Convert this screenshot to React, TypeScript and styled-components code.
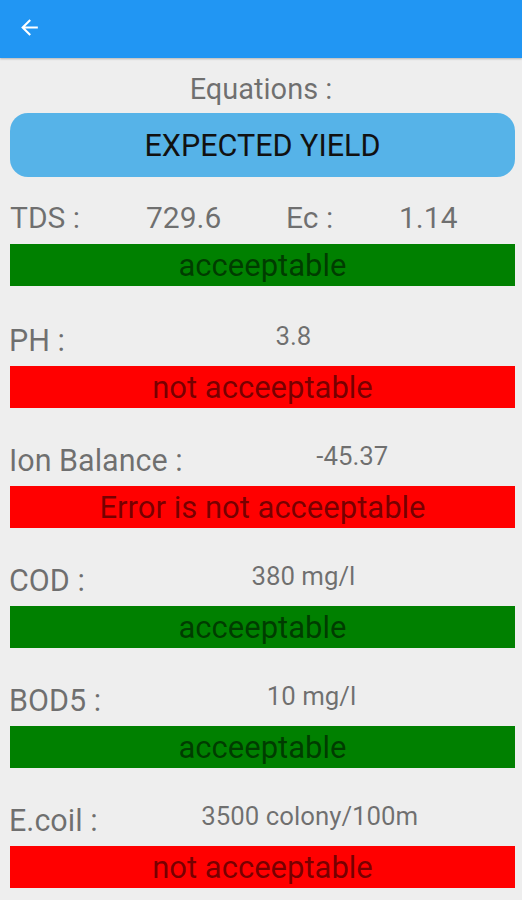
import React from "react";
import styled, { createGlobalStyle } from "styled-components";

const Global = createGlobalStyle`
  html, body { margin: 0; padding: 0; background: #eeeeee; }
  body { font-family: Roboto, "Noto Sans", Arial, sans-serif; }
  * { box-sizing: border-box; }
`;

const Page = styled.div`
  width: 522px;
  min-height: 900px;
  background: #eeeeee;
  display: flex;
  flex-direction: column;
  overflow: hidden;
`;

const AppBar = styled.header`
  height: 58px;
  background: #2196f3;
  display: flex;
  align-items: flex-start;
  padding: 15px 0 0 17px;
  box-shadow: 0 1px 2px rgba(0, 0, 0, 0.25);
`;

const BackButton = styled.button`
  border: 0;
  background: transparent;
  padding: 0;
  width: 25px;
  height: 25px;
  display: flex;
  color: #fff;
`;

const Title = styled.div`
  margin-top: 14px;
  text-align: center;
  font-size: 29px;
  line-height: 34px;
  color: rgba(0, 0, 0, 0.54);
`;

const YieldButton = styled.button`
  margin: 7px 7px 0 10px;
  height: 64px;
  border: 0;
  border-radius: 18px;
  background: #56b3e8;
  color: #111;
  font-family: Roboto, "Noto Sans", Arial, sans-serif;
  font-size: 30.5px;
  text-transform: uppercase;
  display: flex;
  align-items: center;
  justify-content: center;
`;

const Sections = styled.div`
  display: flex;
  flex-direction: column;
  gap: 33px;
  margin-top: 24px;
`;

const Section = styled.section<{ $first?: boolean }>`
  display: flex;
  flex-direction: column;
  gap: 10px;
  margin-bottom: ${(p) => (p.$first ? "2px" : "0")};
`;

const QuadRow = styled.div`
  display: grid;
  grid-template-columns: 136px 140px 113px 1fr;
  padding-left: 10px;
  font-size: 30px;
  line-height: 33px;
  color: rgba(0, 0, 0, 0.54);
`;

const Row = styled.div`
  display: flex;
  align-items: flex-start;
  padding-left: 9px;
  height: 35px;
`;

const Label = styled.div`
  font-size: 30.5px;
  line-height: 34px;
  padding-top: 3px;
  color: rgba(0, 0, 0, 0.54);
  white-space: nowrap;
`;

const Value = styled.div`
  flex: 1;
  text-align: center;
  font-size: 25.8px;
  line-height: 29px;
  padding-top: 1px;
  color: rgba(0, 0, 0, 0.54);
  white-space: nowrap;
`;

const StatusBar = styled.div<{ $ok: boolean }>`
  margin: 0 7px 0 10px;
  height: 42px;
  background: ${(p) => (p.$ok ? "#008000" : "#ff0000")};
  color: rgba(0, 0, 0, 0.54);
  font-size: 31px;
  line-height: 42px;
  padding-top: 1px;
  text-align: center;
  white-space: nowrap;
`;

const items = [
  { label: "PH :", value: "3.8", status: "not acceeptable", ok: false },
  { label: "Ion Balance :", value: "-45.37", status: "Error is not acceeptable", ok: false },
  { label: "COD :", value: "380 mg/l", status: "acceeptable", ok: true },
  { label: "BOD5 :", value: "10 mg/l", status: "acceeptable", ok: true },
  { label: "E.coil :", value: "3500 colony/100m", status: "not acceeptable", ok: false },
];

export default function App() {
  return (
    <Page>
      <Global />
      <AppBar>
        <BackButton aria-label="back">
          <svg width="25" height="25" viewBox="0 0 24 24" fill="currentColor">
            <path d="M20 11H7.83l5.59-5.59L12 4l-8 8 8 8 1.41-1.41L7.83 13H20v-2z" />
          </svg>
        </BackButton>
      </AppBar>
      <Title>Equations :</Title>
      <YieldButton>Expected Yield</YieldButton>
      <Sections>
        <Section $first>
          <QuadRow>
            <span>TDS :</span>
            <span>729.6</span>
            <span>Ec :</span>
            <span>1.14</span>
          </QuadRow>
          <StatusBar $ok>acceeptable</StatusBar>
        </Section>
        {items.map((it) => (
          <Section key={it.label}>
            <Row>
              <Label>{it.label}</Label>
              <Value>{it.value}</Value>
            </Row>
            <StatusBar $ok={it.ok}>{it.status}</StatusBar>
          </Section>
        ))}
      </Sections>
    </Page>
  );
}
